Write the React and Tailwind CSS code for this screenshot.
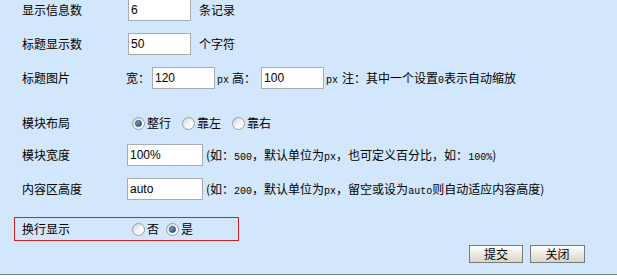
import React, { useState } from 'react';

const cjk = { fontFamily: '"Noto Sans CJK SC", "Liberation Sans", sans-serif' };
const mono = { fontFamily: '"Liberation Mono", monospace' };

function Radio({ checked, label, onClick, gap = 'mr-[11px]' }) {
  return (
    <label className={`flex items-center cursor-pointer ${gap}`} onClick={onClick}>
      <span className="relative w-[13px] h-[13px] rounded-full border border-[#9a9fa6] bg-gradient-to-br from-[#c9cdd2] via-[#f4f5f6] to-white flex items-center justify-center">
        {checked && (
          <span className="w-[7px] h-[7px] rounded-full bg-gradient-to-br from-[#7fb4e8] to-[#11508f] border border-[#1b3f6b]" />
        )}
      </span>
      <span className="ml-[2px] text-[12px] leading-none text-black">{label}</span>
    </label>
  );
}

function TextBox({ value, w }) {
  return (
    <input
      defaultValue={value}
      className={`${w} h-[22px] border border-[#a7acb3] bg-white px-[2px] text-[12px] text-black outline-none`}
      style={{ fontFamily: '"Liberation Sans", Arial, sans-serif' }}
    />
  );
}

// 小号等宽拉丁字符
const M = ({ children }) => (
  <span className="text-[10px]" style={mono}>{children}</span>
);

export default function App() {
  const [layout, setLayout] = useState('full');
  const [wrap, setWrap] = useState(true);

  return (
    <div className="w-[617px] h-[280px] bg-white overflow-hidden" style={cjk}>
      <div className="h-[275px] bg-[#d2e7fb] border-b-[1px] border-[#7d7f82] flex flex-col text-[12px] text-black">
        {/* 显示信息数 */}
        <div className="h-[20px] flex items-center pl-[22px]">
          <span className="w-[106px]">显示信息数</span>
          <TextBox value="6" w="w-[63px]" />
          <span className="ml-[8px]">条记录</span>
        </div>

        {/* 标题显示数 */}
        <div className="mt-[7px] h-[34px] flex items-center pl-[22px]">
          <span className="w-[106px]">标题显示数</span>
          <TextBox value="50" w="w-[63px]" />
          <span className="ml-[8px]">个字符</span>
        </div>

        {/* 标题图片 */}
        <div className="h-[34px] flex items-center pl-[22px]">
          <span className="w-[104px]">标题图片</span>
          <span>宽：</span>
          <span className="ml-[2px]"><TextBox value="120" w="w-[63px]" /></span>
          <span className="ml-[2px]"><M>px</M></span>
          <span className="ml-[3px]">高：</span>
          <span className="ml-[5px]"><TextBox value="100" w="w-[63px]" /></span>
          <span className="ml-[2px]"><M>px</M></span>
          <span className="ml-[4px]">注：其中一个设置<M>0</M>表示自动缩放</span>
        </div>

        {/* 模块布局 */}
        <div className="mt-[13px] h-[30px] flex items-center pl-[22px]">
          <span className="w-[110px]">模块布局</span>
          <Radio checked={layout === 'full'} label="整行" onClick={() => setLayout('full')} />
          <Radio checked={layout === 'left'} label="靠左" onClick={() => setLayout('left')} />
          <Radio checked={layout === 'right'} label="靠右" onClick={() => setLayout('right')} />
        </div>

        {/* 模块宽度 */}
        <div className="mt-[2px] h-[30px] flex items-center pl-[22px]">
          <span className="w-[105px]">模块宽度</span>
          <TextBox value="100%" w="w-[76px]" />
          <span className="ml-[3px]">(如：<M>500</M>，默认单位为<M>px</M>，也可定义百分比，如：<M>100%</M>)</span>
        </div>

        {/* 内容区高度 */}
        <div className="mt-[4px] h-[30px] flex items-center pl-[22px]">
          <span className="w-[105px]">内容区高度</span>
          <TextBox value="auto" w="w-[76px]" />
          <span className="ml-[3px]">(如：<M>200</M>，默认单位为<M>px</M>，留空或设为<M>auto</M>则自动适应内容高度)</span>
        </div>

        {/* 换行显示 */}
        <div className="mt-[13px] ml-[14px] w-[225px] h-[24px] border border-[#c8232f] flex items-center pl-[7px]">
          <span className="w-[110px]">换行显示</span>
          <Radio checked={!wrap} label="否" onClick={() => setWrap(false)} gap="mr-[7px]" />
          <Radio checked={wrap} label="是" onClick={() => setWrap(true)} gap="" />
        </div>

        {/* 按钮 */}
        <div className="mt-[4px] flex justify-end gap-[7px] pr-[32px]">
          <button className="w-[54px] h-[18px] border border-[#777a7e] bg-gradient-to-b from-white to-[#d9d4c6] text-[12px] leading-none text-black">提交</button>
          <button className="w-[55px] h-[18px] border border-[#777a7e] bg-gradient-to-b from-white to-[#d9d4c6] text-[12px] leading-none text-black">关闭</button>
        </div>
      </div>
    </div>
  );
}
